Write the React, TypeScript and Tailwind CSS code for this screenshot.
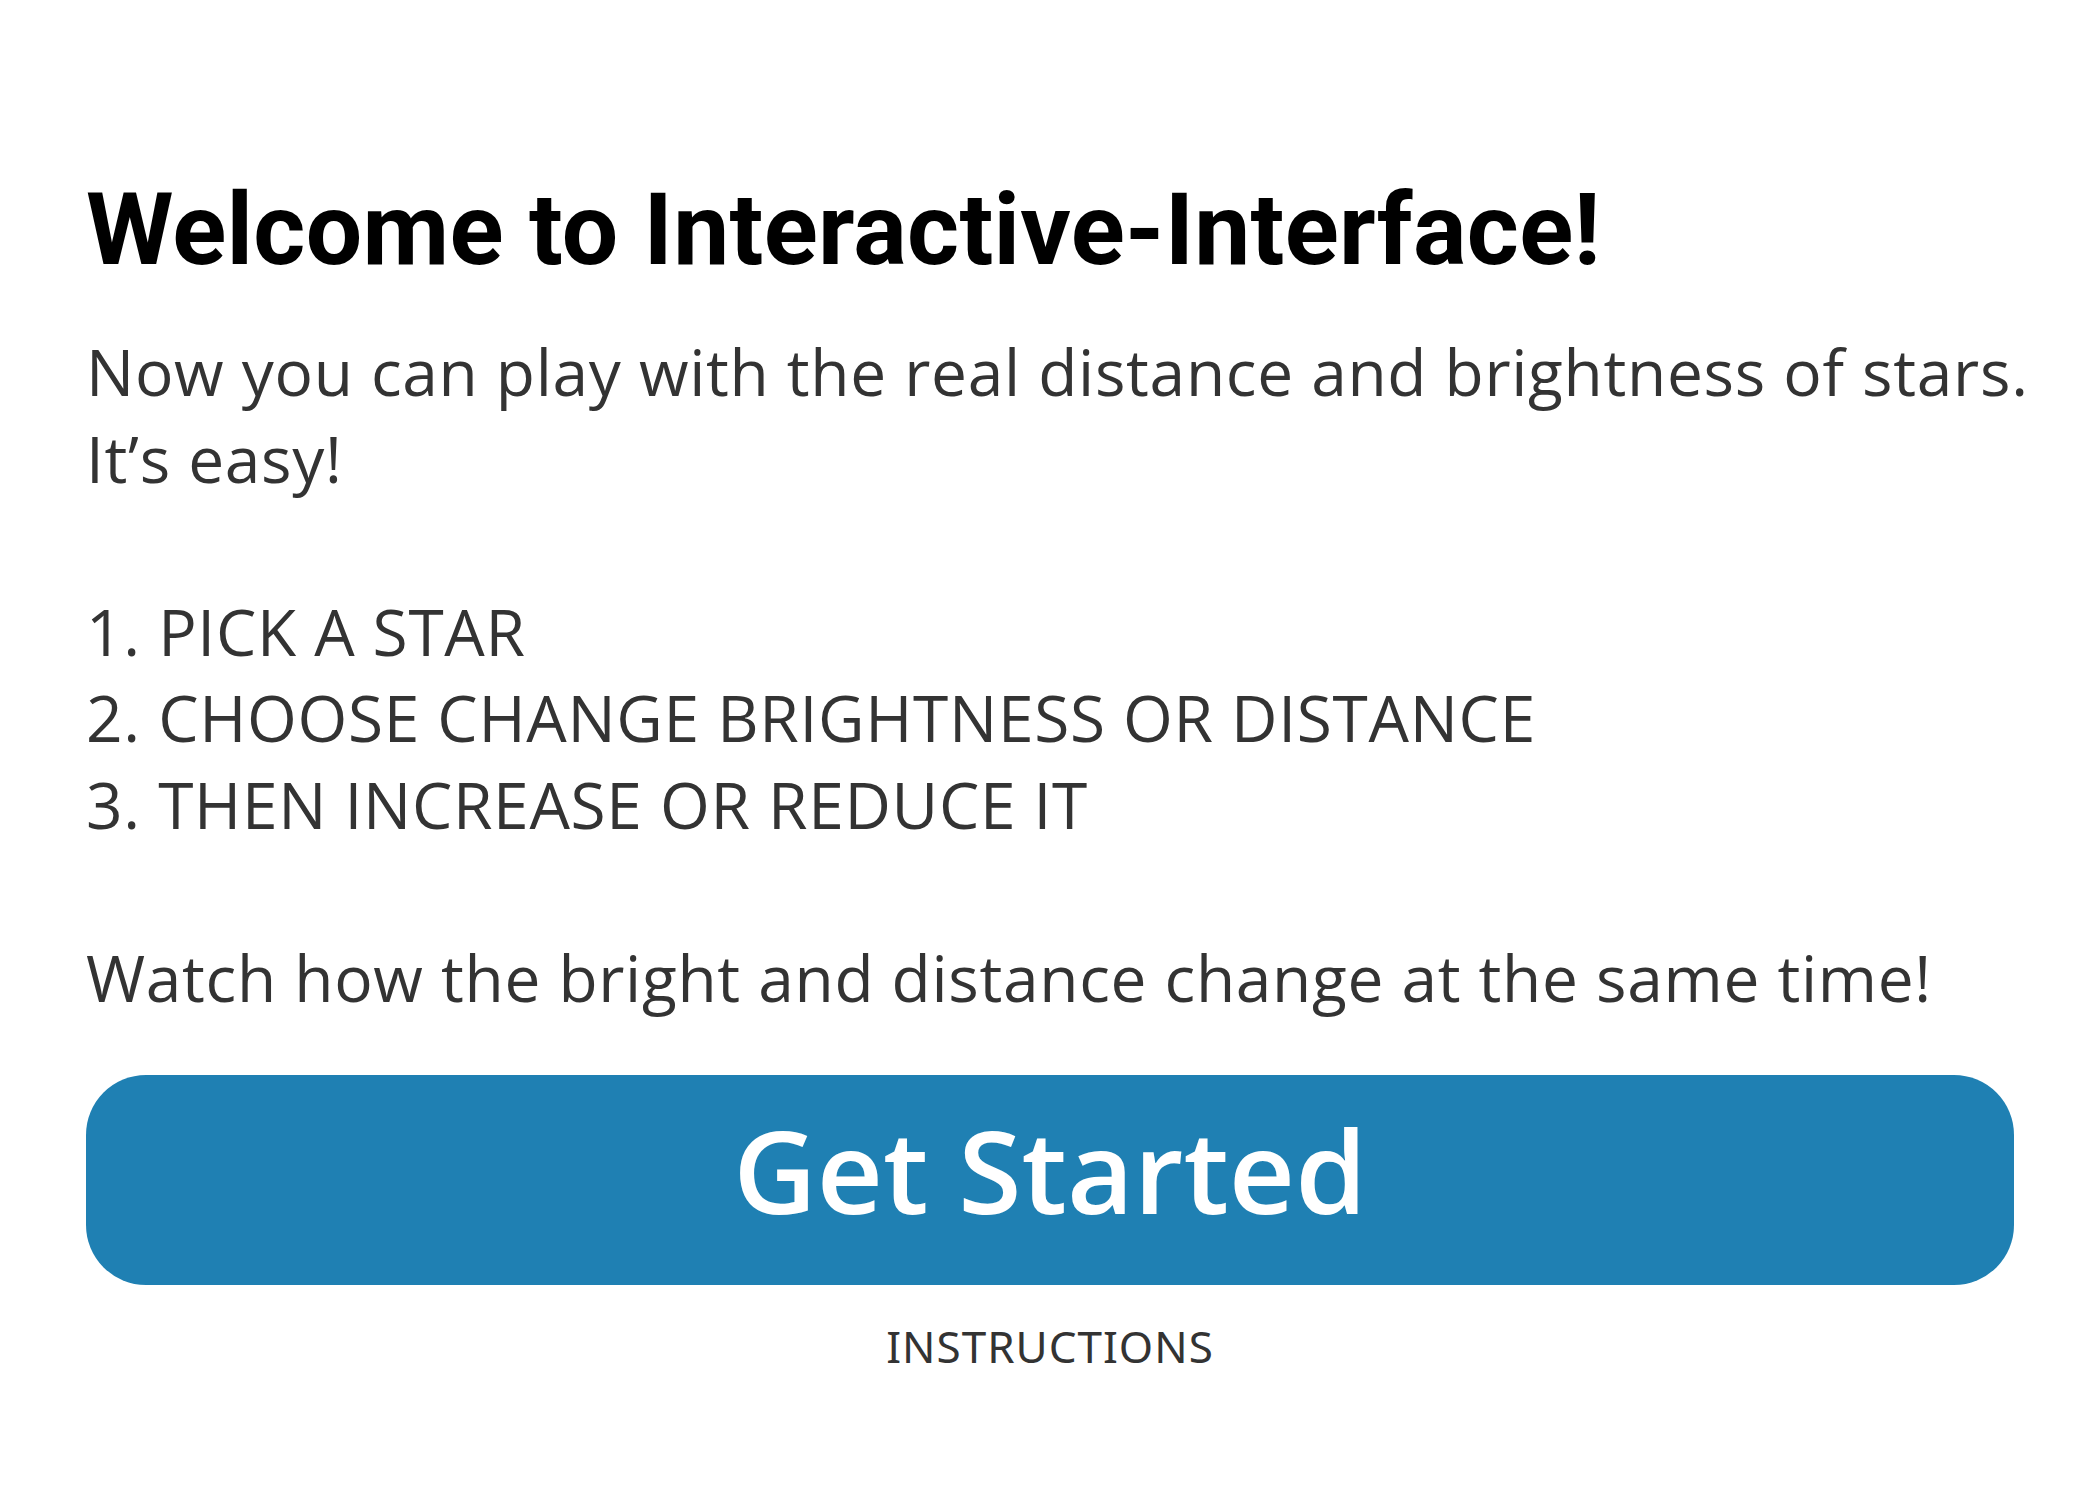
export default function App() {
  return (
    <div className="min-h-screen w-full bg-white">
      <div className="flex flex-col px-[86px] pt-[180px]">
        <h1 className="font-['Roboto',sans-serif] text-[100px] font-bold leading-none tracking-[0.3px] text-black">
          Welcome to Interactive-Interface!
        </h1>
        <div className="mt-[49px] font-['Open_Sans',sans-serif] text-[64px] leading-[86.5px] tracking-[0.7px] text-[#333333] whitespace-nowrap">
          <p>Now you can play with the real distance and brightness of stars.</p>
          <p>It’s easy!</p>
          <p>&nbsp;</p>
          <p>1. PICK A STAR</p>
          <p>2. CHOOSE CHANGE BRIGHTNESS OR DISTANCE</p>
          <p>3. THEN INCREASE OR REDUCE IT</p>
          <p>&nbsp;</p>
          <p>Watch how the bright and distance change at the same time!</p>
        </div>
        <button className="mt-[54px] flex h-[210px] w-full items-center justify-center rounded-[60px] bg-[#1f80b3] pb-[20px] font-['Open_Sans',sans-serif] text-[115px] font-semibold text-white">
          Get Started
        </button>
        <div className="mt-[28px] text-center font-['Noto_Sans',sans-serif] text-[44px] tracking-[1px] text-[#333333]">
          INSTRUCTIONS
        </div>
      </div>
    </div>
  );
}
